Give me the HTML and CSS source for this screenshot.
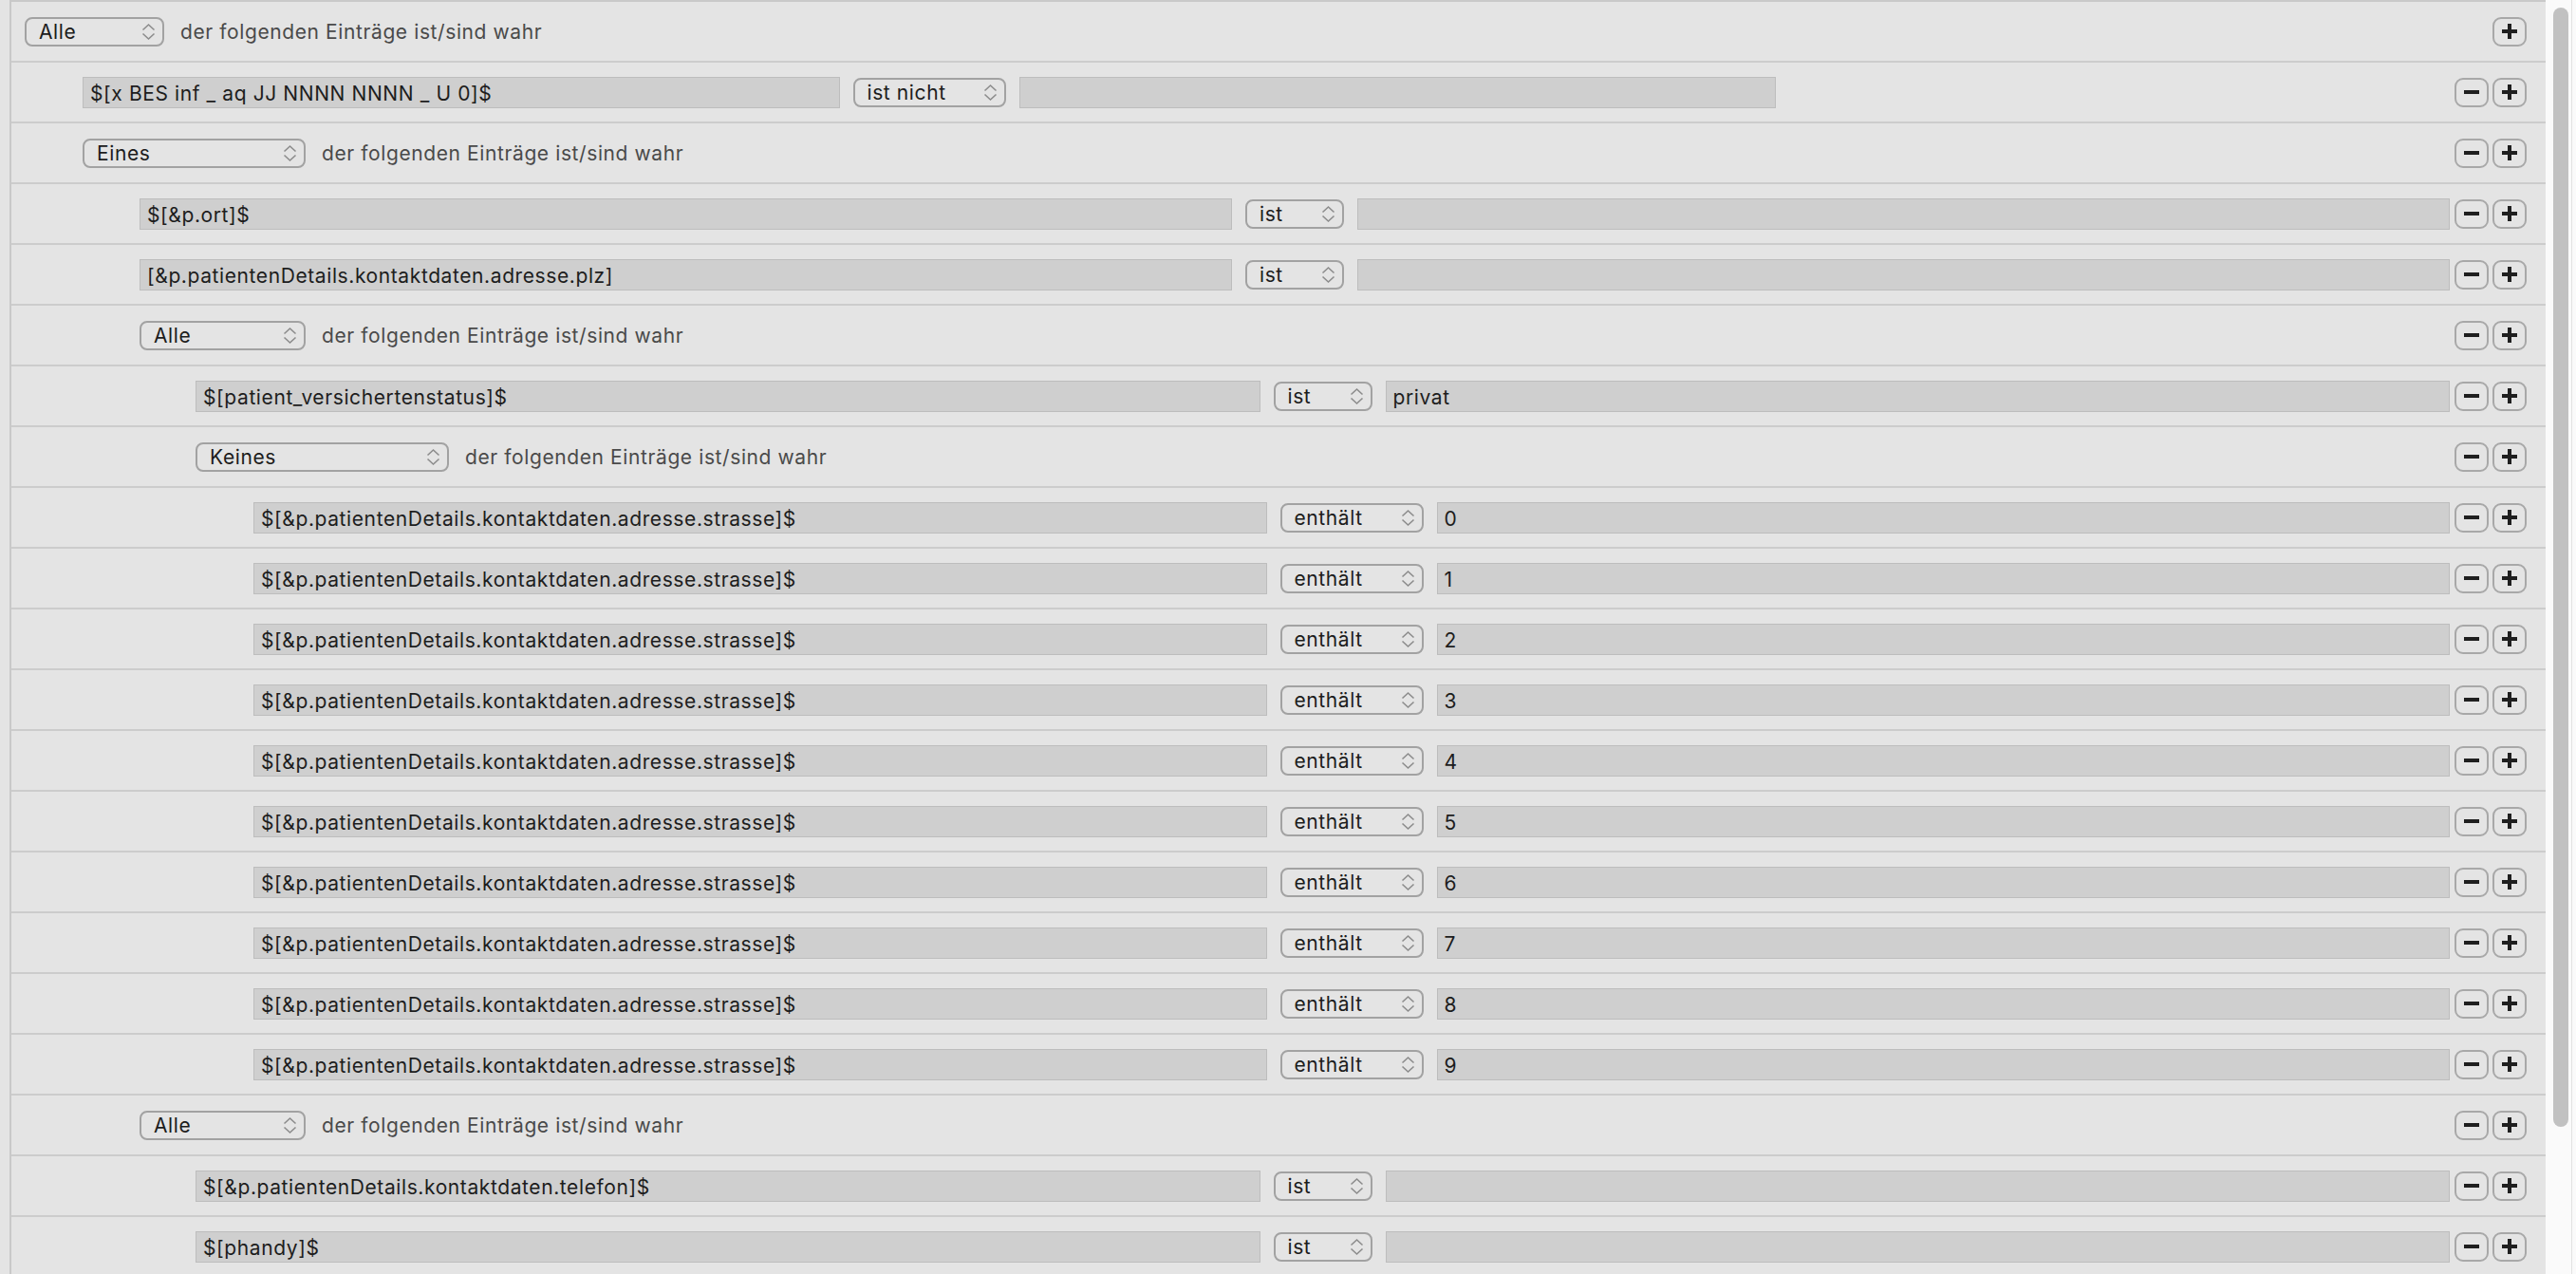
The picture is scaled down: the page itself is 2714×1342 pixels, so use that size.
FILE: index.html
```html
<!DOCTYPE html>
<html lang="de">
<head>
    <meta charset="UTF-8">
    <title>Bedingungen</title>
    <link rel="stylesheet" href="styles.css">
</head>
<body>
    <svg class="defs" width="0" height="0">
        <symbol id="chev" viewBox="0 0 15 19">
            <path d="M1.5 7.5 L7.5 2 L13.5 7.5 M1.5 11.5 L7.5 17 L13.5 11.5" fill="none" stroke="#8c8c8c" stroke-width="1.6"/>
        </symbol>
        <symbol id="plus" viewBox="0 0 16 16">
            <rect x="6" y="0" width="4" height="16"/>
            <rect x="0" y="6" width="16" height="4"/>
        </symbol>
        <symbol id="minus" viewBox="0 0 16 16">
            <rect x="0" y="6" width="16" height="4"/>
        </symbol>
    </svg>

    <div class="editor">
        <div class="table">
            <div class="row lvl-0">
                <div class="popup w-alle">Alle<svg><use href="#chev"/></svg></div>
                <span class="label">der folgenden Einträge ist/sind wahr</span>
                <div class="btns">
                    <div class="btn"><svg><use href="#plus"/></svg></div>
                </div>
            </div>

            <div class="row lvl-1">
                <div class="cond narrow">
                    <div class="field">$[x BES inf _ aq JJ NNNN NNNN _ U 0]$</div>
                    <div class="popup w-istnicht">ist nicht<svg><use href="#chev"/></svg></div>
                    <div class="field"></div>
                </div>
                <div class="btns">
                    <div class="btn"><svg><use href="#minus"/></svg></div>
                    <div class="btn"><svg><use href="#plus"/></svg></div>
                </div>
            </div>

            <div class="row lvl-1">
                <div class="popup w-eines">Eines<svg><use href="#chev"/></svg></div>
                <span class="label">der folgenden Einträge ist/sind wahr</span>
                <div class="btns">
                    <div class="btn"><svg><use href="#minus"/></svg></div>
                    <div class="btn"><svg><use href="#plus"/></svg></div>
                </div>
            </div>

            <div class="row lvl-2">
                <div class="cond">
                    <div class="field">$[&amp;p.ort]$</div>
                    <div class="popup w-ist">ist<svg><use href="#chev"/></svg></div>
                    <div class="field"></div>
                </div>
                <div class="btns">
                    <div class="btn"><svg><use href="#minus"/></svg></div>
                    <div class="btn"><svg><use href="#plus"/></svg></div>
                </div>
            </div>

            <div class="row lvl-2">
                <div class="cond">
                    <div class="field">[&amp;p.patientenDetails.kontaktdaten.adresse.plz]</div>
                    <div class="popup w-ist">ist<svg><use href="#chev"/></svg></div>
                    <div class="field"></div>
                </div>
                <div class="btns">
                    <div class="btn"><svg><use href="#minus"/></svg></div>
                    <div class="btn"><svg><use href="#plus"/></svg></div>
                </div>
            </div>

            <div class="row lvl-2">
                <div class="popup w-alle2">Alle<svg><use href="#chev"/></svg></div>
                <span class="label">der folgenden Einträge ist/sind wahr</span>
                <div class="btns">
                    <div class="btn"><svg><use href="#minus"/></svg></div>
                    <div class="btn"><svg><use href="#plus"/></svg></div>
                </div>
            </div>

            <div class="row lvl-3">
                <div class="cond">
                    <div class="field">$[patient_versichertenstatus]$</div>
                    <div class="popup w-ist">ist<svg><use href="#chev"/></svg></div>
                    <div class="field">privat</div>
                </div>
                <div class="btns">
                    <div class="btn"><svg><use href="#minus"/></svg></div>
                    <div class="btn"><svg><use href="#plus"/></svg></div>
                </div>
            </div>

            <div class="row lvl-3">
                <div class="popup w-keines">Keines<svg><use href="#chev"/></svg></div>
                <span class="label">der folgenden Einträge ist/sind wahr</span>
                <div class="btns">
                    <div class="btn"><svg><use href="#minus"/></svg></div>
                    <div class="btn"><svg><use href="#plus"/></svg></div>
                </div>
            </div>

            <div class="row lvl-4">
                <div class="cond">
                    <div class="field">$[&amp;p.patientenDetails.kontaktdaten.adresse.strasse]$</div>
                    <div class="popup w-enthaelt">enthält<svg><use href="#chev"/></svg></div>
                    <div class="field">0</div>
                </div>
                <div class="btns">
                    <div class="btn"><svg><use href="#minus"/></svg></div>
                    <div class="btn"><svg><use href="#plus"/></svg></div>
                </div>
            </div>

            <div class="row lvl-4">
                <div class="cond">
                    <div class="field">$[&amp;p.patientenDetails.kontaktdaten.adresse.strasse]$</div>
                    <div class="popup w-enthaelt">enthält<svg><use href="#chev"/></svg></div>
                    <div class="field">1</div>
                </div>
                <div class="btns">
                    <div class="btn"><svg><use href="#minus"/></svg></div>
                    <div class="btn"><svg><use href="#plus"/></svg></div>
                </div>
            </div>

            <div class="row lvl-4">
                <div class="cond">
                    <div class="field">$[&amp;p.patientenDetails.kontaktdaten.adresse.strasse]$</div>
                    <div class="popup w-enthaelt">enthält<svg><use href="#chev"/></svg></div>
                    <div class="field">2</div>
                </div>
                <div class="btns">
                    <div class="btn"><svg><use href="#minus"/></svg></div>
                    <div class="btn"><svg><use href="#plus"/></svg></div>
                </div>
            </div>

            <div class="row lvl-4">
                <div class="cond">
                    <div class="field">$[&amp;p.patientenDetails.kontaktdaten.adresse.strasse]$</div>
                    <div class="popup w-enthaelt">enthält<svg><use href="#chev"/></svg></div>
                    <div class="field">3</div>
                </div>
                <div class="btns">
                    <div class="btn"><svg><use href="#minus"/></svg></div>
                    <div class="btn"><svg><use href="#plus"/></svg></div>
                </div>
            </div>

            <div class="row lvl-4">
                <div class="cond">
                    <div class="field">$[&amp;p.patientenDetails.kontaktdaten.adresse.strasse]$</div>
                    <div class="popup w-enthaelt">enthält<svg><use href="#chev"/></svg></div>
                    <div class="field">4</div>
                </div>
                <div class="btns">
                    <div class="btn"><svg><use href="#minus"/></svg></div>
                    <div class="btn"><svg><use href="#plus"/></svg></div>
                </div>
            </div>

            <div class="row lvl-4">
                <div class="cond">
                    <div class="field">$[&amp;p.patientenDetails.kontaktdaten.adresse.strasse]$</div>
                    <div class="popup w-enthaelt">enthält<svg><use href="#chev"/></svg></div>
                    <div class="field">5</div>
                </div>
                <div class="btns">
                    <div class="btn"><svg><use href="#minus"/></svg></div>
                    <div class="btn"><svg><use href="#plus"/></svg></div>
                </div>
            </div>

            <div class="row lvl-4">
                <div class="cond">
                    <div class="field">$[&amp;p.patientenDetails.kontaktdaten.adresse.strasse]$</div>
                    <div class="popup w-enthaelt">enthält<svg><use href="#chev"/></svg></div>
                    <div class="field">6</div>
                </div>
                <div class="btns">
                    <div class="btn"><svg><use href="#minus"/></svg></div>
                    <div class="btn"><svg><use href="#plus"/></svg></div>
                </div>
            </div>

            <div class="row lvl-4">
                <div class="cond">
                    <div class="field">$[&amp;p.patientenDetails.kontaktdaten.adresse.strasse]$</div>
                    <div class="popup w-enthaelt">enthält<svg><use href="#chev"/></svg></div>
                    <div class="field">7</div>
                </div>
                <div class="btns">
                    <div class="btn"><svg><use href="#minus"/></svg></div>
                    <div class="btn"><svg><use href="#plus"/></svg></div>
                </div>
            </div>

            <div class="row lvl-4">
                <div class="cond">
                    <div class="field">$[&amp;p.patientenDetails.kontaktdaten.adresse.strasse]$</div>
                    <div class="popup w-enthaelt">enthält<svg><use href="#chev"/></svg></div>
                    <div class="field">8</div>
                </div>
                <div class="btns">
                    <div class="btn"><svg><use href="#minus"/></svg></div>
                    <div class="btn"><svg><use href="#plus"/></svg></div>
                </div>
            </div>

            <div class="row lvl-4">
                <div class="cond">
                    <div class="field">$[&amp;p.patientenDetails.kontaktdaten.adresse.strasse]$</div>
                    <div class="popup w-enthaelt">enthält<svg><use href="#chev"/></svg></div>
                    <div class="field">9</div>
                </div>
                <div class="btns">
                    <div class="btn"><svg><use href="#minus"/></svg></div>
                    <div class="btn"><svg><use href="#plus"/></svg></div>
                </div>
            </div>

            <div class="row lvl-2">
                <div class="popup w-alle2">Alle<svg><use href="#chev"/></svg></div>
                <span class="label">der folgenden Einträge ist/sind wahr</span>
                <div class="btns">
                    <div class="btn"><svg><use href="#minus"/></svg></div>
                    <div class="btn"><svg><use href="#plus"/></svg></div>
                </div>
            </div>

            <div class="row lvl-3">
                <div class="cond">
                    <div class="field">$[&amp;p.patientenDetails.kontaktdaten.telefon]$</div>
                    <div class="popup w-ist">ist<svg><use href="#chev"/></svg></div>
                    <div class="field"></div>
                </div>
                <div class="btns">
                    <div class="btn"><svg><use href="#minus"/></svg></div>
                    <div class="btn"><svg><use href="#plus"/></svg></div>
                </div>
            </div>

            <div class="row lvl-3">
                <div class="cond">
                    <div class="field">$[phandy]$</div>
                    <div class="popup w-ist">ist<svg><use href="#chev"/></svg></div>
                    <div class="field"></div>
                </div>
                <div class="btns">
                    <div class="btn"><svg><use href="#minus"/></svg></div>
                    <div class="btn"><svg><use href="#plus"/></svg></div>
                </div>
            </div>
        </div>

        <div class="scroll">
            <div class="track">
                <div class="thumb"></div>
            </div>
        </div>
    </div>
</body>
</html>
```

FILE: styles.css
```css
* {
    box-sizing: border-box;
}

body {
    margin: 0;
    padding: 0;
    font-family: Inter, "Liberation Sans", sans-serif;
    font-size: 21px;
    letter-spacing: 0.6px;
    background-color: #e4e4e4;
    overflow: hidden;
}

.defs {
    display: block;
    width: 0;
    height: 0;
}

.editor {
    display: flex;
    height: 1342px;
    overflow: hidden;
}

.table {
    flex: 1;
    margin-left: 10px;
    border-left: 2px solid #c9c9c9;
    border-top: 2px solid #c9c9c9;
    background-color: #e4e4e4;
}

.row {
    display: flex;
    align-items: center;
    height: 64px;
    padding-right: 20px;
    border-bottom: 2px solid #cccccc;
}

.lvl-0 { padding-left: 14px; }
.lvl-1 { padding-left: 75px; }
.lvl-2 { padding-left: 135px; }
.lvl-3 { padding-left: 194px; }
.lvl-4 { padding-left: 255px; }

.cond {
    flex: 1;
    display: flex;
    align-items: center;
    gap: 14px;
}

.cond.narrow {
    flex: none;
    width: 1784px;
}

.field {
    flex: 1;
    min-width: 0;
    height: 33px;
    padding: 2px 7px 0;
    display: flex;
    align-items: center;
    background-color: #cfcfcf;
    border: 1px solid #bdbdbd;
    color: #1d1d1d;
    white-space: nowrap;
    overflow: hidden;
}

.popup {
    flex: none;
    height: 31px;
    padding: 0 7px 0 13px;
    display: flex;
    align-items: center;
    justify-content: space-between;
    border: 2px solid #a2a2a2;
    border-radius: 8px;
    color: #1c1c1c;
    white-space: nowrap;
}

.popup svg {
    width: 15px;
    height: 19px;
}

.w-alle { width: 147px; }
.w-alle2 { width: 175px; }
.w-eines { width: 235px; }
.w-keines { width: 267px; }
.w-ist { width: 104px; }
.w-istnicht { width: 161px; }
.w-enthaelt { width: 151px; }

.label {
    margin-left: 17px;
    color: #4a4a4a;
}

.btns {
    margin-left: auto;
    padding-left: 5px;
    display: flex;
    gap: 4px;
}

.btn {
    width: 36px;
    height: 31px;
    display: flex;
    align-items: center;
    justify-content: center;
    border: 2px solid #a8a8a8;
    border-radius: 9px;
}

.btn svg {
    width: 16px;
    height: 16px;
    fill: #1f1f1f;
}

.scroll {
    width: 32px;
    display: flex;
    background-color: #fafafa;
}

.track {
    width: 28px;
    padding: 8px 0 0 8px;
    border-right: 1px solid #e2e2e2;
}

.thumb {
    width: 16px;
    height: 1179px;
    border-radius: 8px;
    background-color: #c1c1c1;
}
```
